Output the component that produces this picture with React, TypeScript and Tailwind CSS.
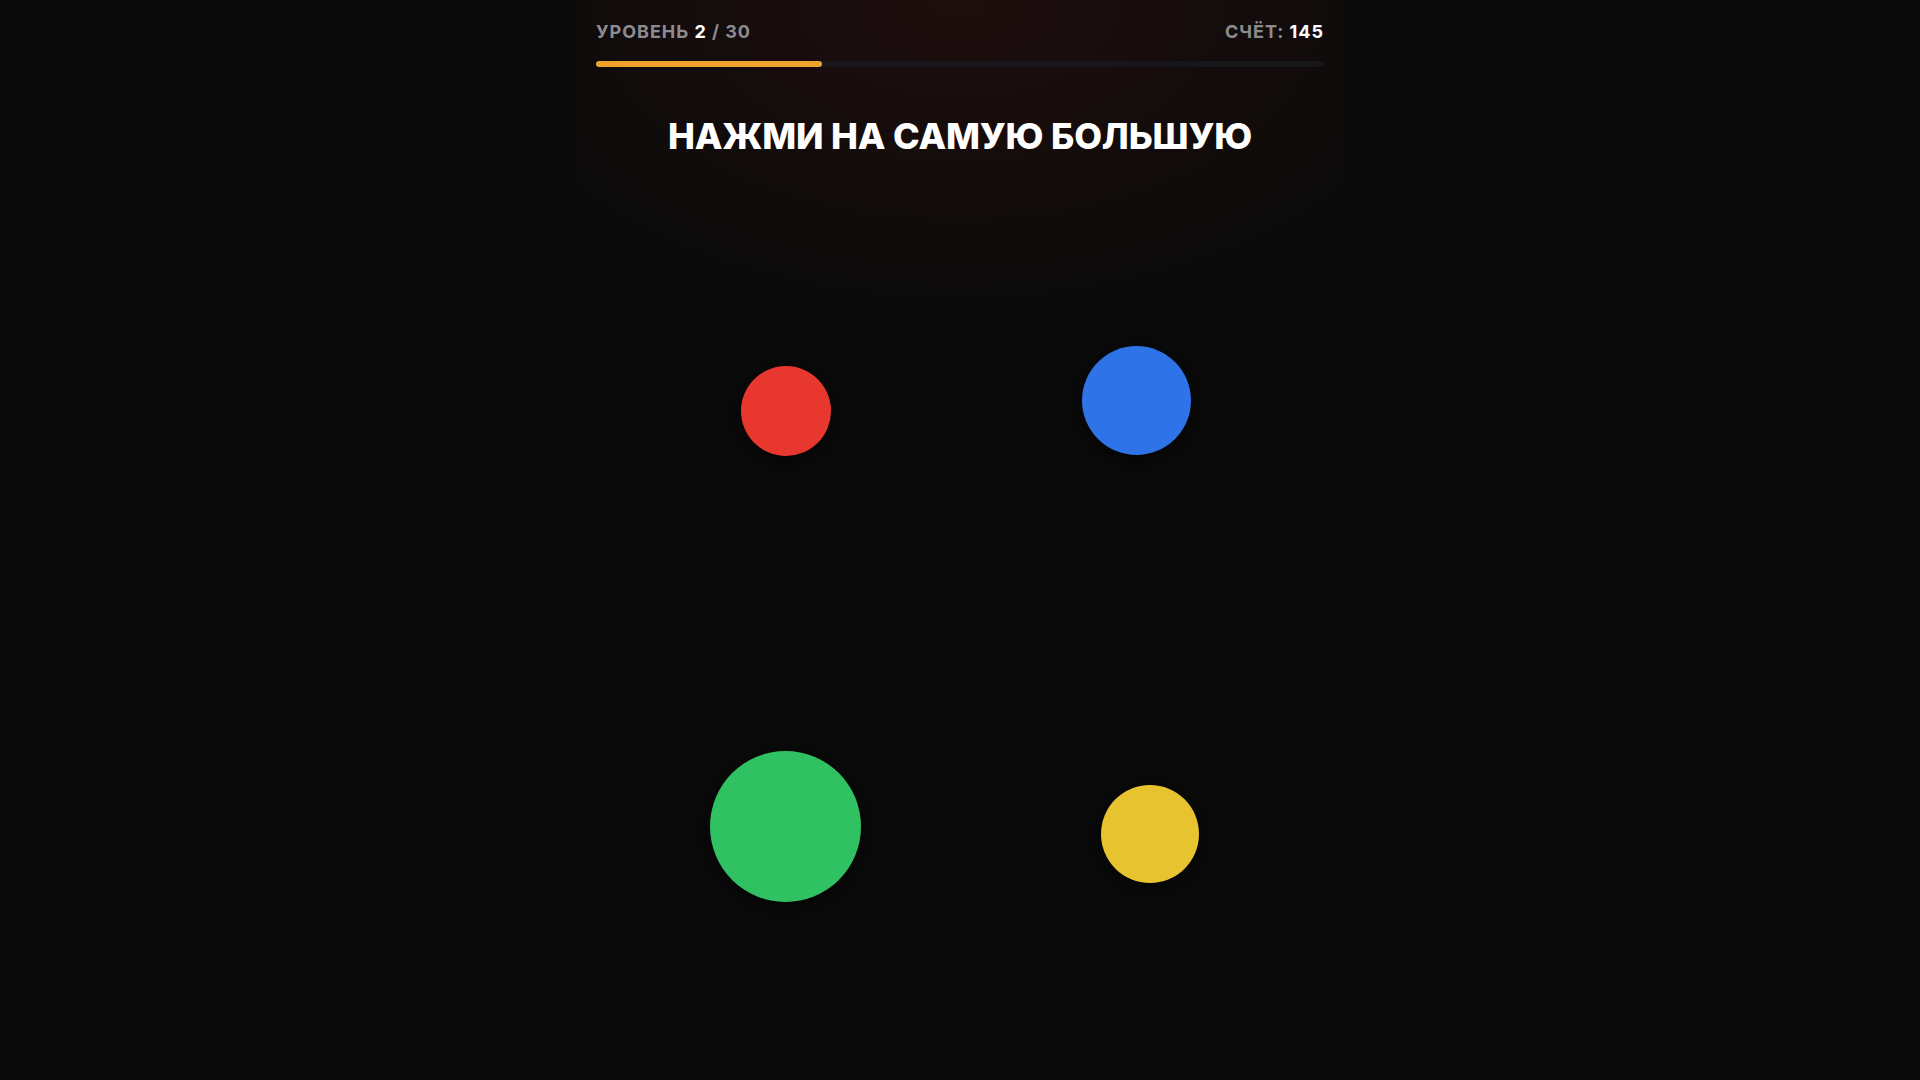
import React from "react";

const circles = [
  { color: "bg-[#e8372f]", x: 786, y: 412, d: 90 },
  { color: "bg-[#2f73e8]", x: 1136, y: 401, d: 109 },
  { color: "bg-[#30c262]", x: 785, y: 827, d: 151 },
  { color: "bg-[#e8c330]", x: 1150, y: 835, d: 98 },
];

export default function App() {
  return (
    <div
      className="min-h-screen w-full bg-[#0a0a0a] text-white"
      style={{ fontFamily: "Inter, 'Noto Sans', sans-serif" }}
    >
      <div className="relative mx-auto flex h-[1080px] w-[768px] flex-col bg-[radial-gradient(ellipse_70%_30%_at_50%_0%,rgba(70,20,20,0.35),rgba(10,10,10,0))] px-5">
        <div className="flex items-center justify-between pt-[22px] text-[18px] font-bold leading-[20px] tracking-[0.055em]">
          <div className="text-[#8c8c90]">
            УРОВЕНЬ <span className="text-white">2</span> / 30
          </div>
          <div className="text-[#8c8c90]">
            СЧЁТ: <span className="text-white">145</span>
          </div>
        </div>
        <div className="mt-[19px] h-[6px] w-full rounded-full bg-[#17171a]">
          <div className="h-full w-[31%] rounded-full bg-[#f0a22e]" />
        </div>
        <h1 className="mt-[47px] text-center text-[36px] font-extrabold leading-[44px] tracking-[-0.005em]">
          НАЖМИ НА САМУЮ БОЛЬШУЮ
        </h1>
        <div className="relative flex-1">
          {circles.map((c, i) => (
            <button
              key={i}
              className={`absolute rounded-full ${c.color} shadow-[0_4px_18px_rgba(0,0,0,0.6)]`}
              style={{
                width: c.d,
                height: c.d,
                left: c.x - 576 - 20 - c.d / 2,
                top: c.y - 159 - c.d / 2,
              }}
            />
          ))}
        </div>
      </div>
    </div>
  );
}
